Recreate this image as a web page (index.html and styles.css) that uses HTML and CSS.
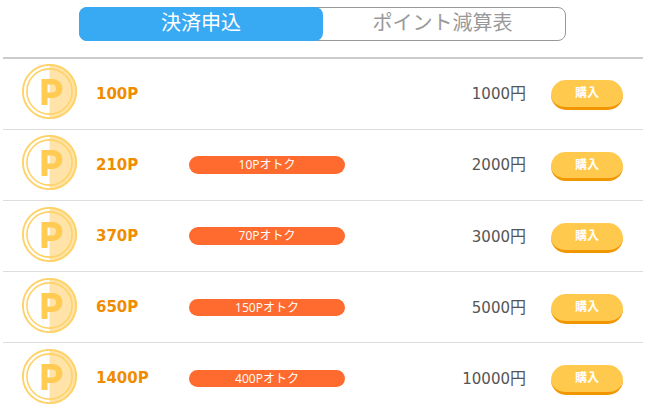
FILE: index.html
```html
<!DOCTYPE html>
<html lang="ja">
<head>
    <meta charset="UTF-8">
    <meta name="viewport" content="width=device-width, initial-scale=1.0">
    <title>決済申込</title>
    <link rel="stylesheet" href="styles.css">
</head>
<body>
    <svg class="defs" width="0" height="0">
        <symbol id="coin" viewBox="0 0 55 55">
            <path d="M27.5 0a27.5 27.5 0 0 1 0 55z" fill="#ffe3a8"/>
            <circle cx="27.5" cy="27.5" r="26.6" fill="none" stroke="#ffd267" stroke-width="1.9"/>
            <circle cx="27.5" cy="27.5" r="22.6" fill="none" stroke="#ffd267" stroke-width="1.6"/>
            <path d="M19.5 41V15h11.500a9.500 9.500 0 0 1 0 19h-5.500v7zM25.500 20.500v8h4.500a4 4 0 0 0 0-8z" fill="#ffcb52" fill-rule="evenodd"/>
        </symbol>
    </svg>

    <div class="tabs">
        <div class="tab active">決済申込</div>
        <div class="tab">ポイント減算表</div>
    </div>

    <ul class="list">
        <li class="row">
            <svg class="coin"><use href="#coin"/></svg>
            <span class="point">100P</span>
            <span class="bonus none"></span>
            <span class="price">1000<span class="yen">円</span></span>
            <span class="buy">購入</span>
        </li>
        <li class="row">
            <svg class="coin"><use href="#coin"/></svg>
            <span class="point">210P</span>
            <span class="bonus">10Pオトク</span>
            <span class="price">2000<span class="yen">円</span></span>
            <span class="buy">購入</span>
        </li>
        <li class="row">
            <svg class="coin"><use href="#coin"/></svg>
            <span class="point">370P</span>
            <span class="bonus">70Pオトク</span>
            <span class="price">3000<span class="yen">円</span></span>
            <span class="buy">購入</span>
        </li>
        <li class="row">
            <svg class="coin"><use href="#coin"/></svg>
            <span class="point">650P</span>
            <span class="bonus">150Pオトク</span>
            <span class="price">5000<span class="yen">円</span></span>
            <span class="buy">購入</span>
        </li>
        <li class="row">
            <svg class="coin"><use href="#coin"/></svg>
            <span class="point">1400P</span>
            <span class="bonus">400Pオトク</span>
            <span class="price">10000<span class="yen">円</span></span>
            <span class="buy">購入</span>
        </li>
    </ul>
</body>
</html>
```

FILE: styles.css
```css
html, body, ul, li {
    margin: 0;
    padding: 0;
}
body {
    height: 410px;
    overflow: hidden;
    background-color: #fff;
    font-family: "Open Sans", "Noto Sans CJK JP", sans-serif;
}
.defs {
    position: absolute;
}
.tabs {
    display: flex;
    box-sizing: border-box;
    width: 487px;
    height: 34px;
    margin: 7px 0 15.8px 79px;
    border: 1px solid #999;
    border-radius: 8px;
}
.tab {
    flex: 1;
    padding-right: 3px;
    text-align: center;
    font-size: 20px;
    line-height: 30px;
    color: #999;
}
.tab.active {
    flex: none;
    width: 244px;
    margin: -1px 0 -1px -1px;
    padding-right: 0;
    border-radius: 8px;
    line-height: 32px;
    color: #fff;
    background-color: #38a9f3;
}
.list {
    width: 640px;
    margin-left: 3px;
    border-top: 2px solid #ccc;
    list-style: none;
}
/* 行の高さは端数あり */
.row {
    display: flex;
    align-items: center;
    box-sizing: border-box;
    height: 71.1px;
    padding: 3.1px 20px 0 19px;
    border-bottom: 1px solid #ddd;
}
.coin {
    flex: none;
    width: 55px;
    height: 55px;
    margin: 0 19px 7px 0;
}
.point {
    width: 93px;
    margin-bottom: 3px;
    font-family: "DejaVu Sans", sans-serif;
    font-size: 15px;
    font-weight: bold;
    color: #f08c00;
}
.bonus {
    width: 156px;
    height: 17.5px;
    margin-bottom: 2.7px;
    border-radius: 9px;
    text-align: center;
    font-size: 12px;
    line-height: 17px;
    color: #fff;
    background-color: #ff6b2e;
}
.bonus.none {
    background: none;
}
.price {
    flex: 1;
    margin: 0 25px 6px 0;
    text-align: right;
    font-family: "DejaVu Sans", "Noto Sans CJK JP", sans-serif;
    font-size: 15px;
    color: #555;
}
.yen {
    font-family: "Noto Sans CJK JP", sans-serif;
    font-size: 16px;
}
.buy {
    box-sizing: border-box;
    width: 72px;
    height: 29.9px;
    border-bottom: 3px solid #f29600;
    border-radius: 15px;
    text-align: center;
    font-size: 12px;
    font-weight: bold;
    line-height: 25px;
    color: #fff;
    background-color: #ffc94d;
}
```
